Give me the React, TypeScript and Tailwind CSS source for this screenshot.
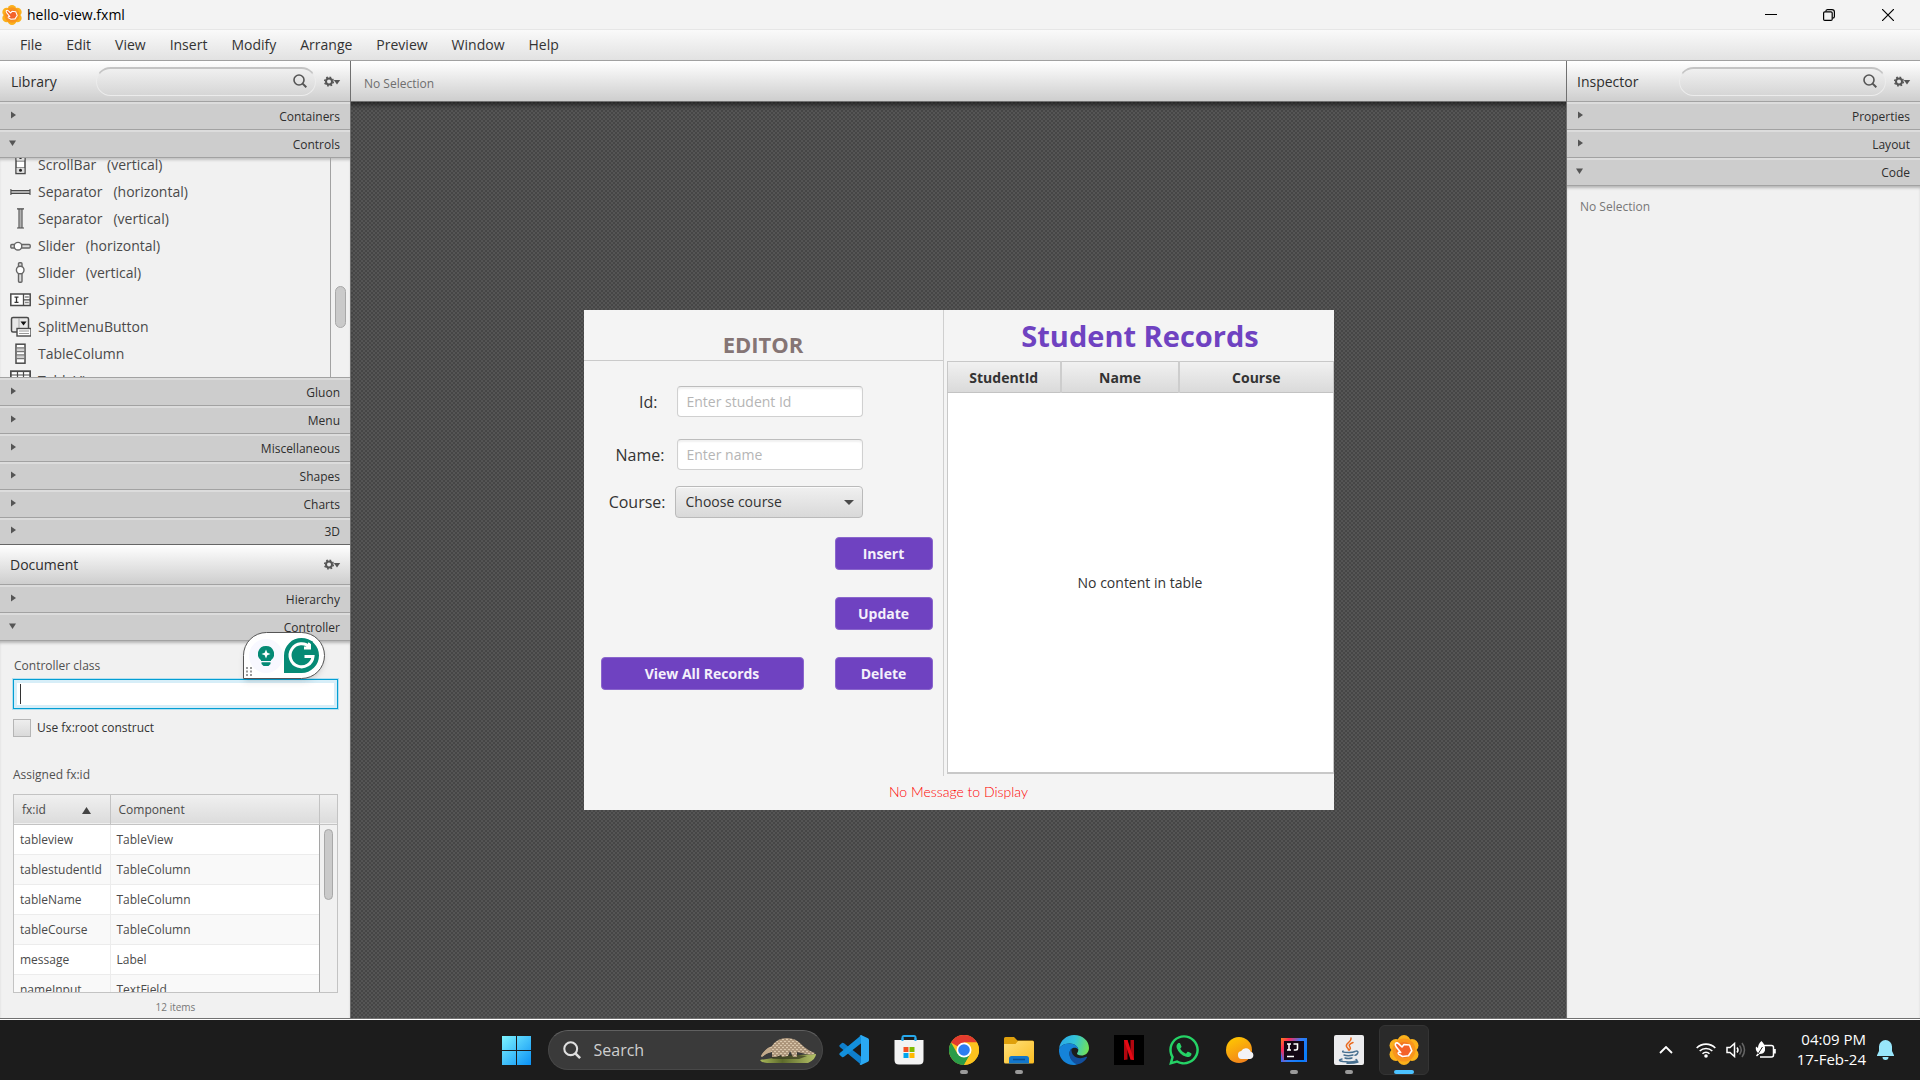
import React from "react";
import { FaWhatsapp } from "react-icons/fa";

type IconProps = { className?: string };

const menus = ["File", "Edit", "View", "Insert", "Modify", "Arrange", "Preview", "Window", "Help"];

/* ---------- small glyphs ---------- */

function SceneBuilderIcon({ className }: IconProps) {
  return (
    <svg viewBox="0 0 30 30" className={className} aria-hidden="true">
      <g fill="#fbb11b">
        <circle cx="15" cy="6.5" r="6.5" />
        <circle cx="15" cy="23.5" r="6.5" />
        <circle cx="7" cy="10.5" r="6.5" />
        <circle cx="23" cy="10.5" r="6.5" />
        <circle cx="7" cy="19.5" r="6.5" />
        <circle cx="23" cy="19.5" r="6.5" />
      </g>
      <circle cx="15" cy="15" r="11.5" fill="#f9951c" />
      <circle cx="15" cy="15" r="8" fill="#f47721" />
      <path
        d="M6.500 8.500c.8-1 2-.8 3 .2l3.500 3.300 2-2.500 5.500.5 2.300 5.800-3.300 5-6 .7-3.800-2.200c-1.200-1.200-.2-2.400 1-2.100l1 .3-4.400-5.600c-.8-1-1.400-2.300-.8-3.400z"
        fill="#f4622a"
        stroke="#fff"
        strokeWidth="1.600"
        strokeLinejoin="round"
      />
    </svg>
  );
}

function SearchIcon({ className }: IconProps) {
  return (
    <svg viewBox="0 0 14 14" className={className} fill="none" stroke="currentColor" aria-hidden="true">
      <circle cx="6" cy="6" r="5" strokeWidth="1.600" />
      <path d="M9.600 9.600 13.300 13.300" strokeWidth="2" />
    </svg>
  );
}

function GearMenuIcon() {
  return (
    <svg viewBox="0 0 17 11" className="h-[11px] w-[17px]" aria-hidden="true">
      <circle cx="5" cy="5.500" r="3" fill="none" stroke="#555" strokeWidth="2" />
      <circle cx="5" cy="5.500" r="4.400" fill="none" stroke="#555" strokeWidth="1.400" strokeDasharray="1.730" />
      <path d="M9.800 4h6.400l-3.200 4.500z" fill="#555" />
    </svg>
  );
}

function GearButton({ label }: { label: string }) {
  return (
    <button type="button" aria-label={label} className="flex">
      <GearMenuIcon />
    </button>
  );
}

/* ---------- side panel pieces ---------- */

function Section({ title, open = false, last = false }: { title: string; open?: boolean; last?: boolean }) {
  return (
    <button
      type="button"
      aria-expanded={open}
      className={
        last
          ? "flex h-[27px] w-full shrink-0 items-center justify-between border-t-2 border-b border-t-[#dcdcdc] border-b-[#666] bg-[#cdcdcd] pr-[10px] pl-[9px] text-xs text-[#2e2e2e]"
          : "flex h-7 w-full shrink-0 items-center justify-between border-t-2 border-b border-t-[#dcdcdc] border-b-[#a2a2a2] bg-[#cdcdcd] pr-[10px] pl-[9px] text-xs text-[#2e2e2e]"
      }
    >
      <svg viewBox="0 0 8 8" className="mb-1 size-2" fill="#555" aria-hidden="true">
        {open ? <path d="M0 1.500h7L3.500 7z" /> : <path d="M2 .5 7 4 2 7.500z" />}
      </svg>
      <span>{title}</span>
    </button>
  );
}

function SearchHeader({ title, titleClass }: { title: string; titleClass: string }) {
  return (
    <div className="flex h-[41px] shrink-0 items-center border-b border-[#a2a2a2] bg-linear-to-b from-white to-[#cecece] pr-[9px]">
      <h2 className={titleClass}>{title}</h2>
      <div className="relative mr-2 flex-1">
        <input
          type="text"
          aria-label={`Search ${title}`}
          className="block h-[29px] w-full rounded-full border border-t-2 border-[#ececec] border-t-[#c4c4c4] bg-linear-to-b from-[#f0f0f0] to-[#d6d6d6] px-4 text-sm outline-none"
        />
        <SearchIcon className="absolute top-[7px] right-[9px] size-[14px] text-[#555]" />
      </div>
      <GearButton label={`${title} options`} />
    </div>
  );
}

const dark = "#4a4a4a";
const controlItems: { label: string; icon: React.ReactNode }[] = [
  {
    label: "ScrollBar \u00a0 (vertical)",
    icon: (
      <g>
        <path d="M6 0h9v19.500H6z" fill="#fff" stroke={dark} strokeWidth="1.500" />
        <path d="M6 7h9M6 13.500h9" stroke={dark} strokeWidth="1.200" />
        <path d="M6.700 13.500h7.600v5.300H6.700zM6.700 1h7.600v5.500H6.700z" fill="#ddd" />
        <circle cx="10.500" cy="3.500" r="1.500" fill="#222" />
        <circle cx="10.500" cy="16.200" r="1.500" fill="#222" />
      </g>
    ),
  },
  {
    label: "Separator \u00a0 (horizontal)",
    icon: (
      <g>
        <path d="M1 11h19" stroke="#b0b0b0" strokeWidth="2" />
        <path d="M1 9.500h19M1 12.500h19M.9 8v6M20 8v6" stroke={dark} strokeWidth="1.100" />
      </g>
    ),
  },
  {
    label: "Separator \u00a0 (vertical)",
    icon: (
      <g>
        <path d="M10.500 1v19" stroke="#b0b0b0" strokeWidth="2" />
        <path d="M9 1v19M12 1v19M7 .9h7M7 20h7" stroke={dark} strokeWidth="1.100" />
      </g>
    ),
  },
  {
    label: "Slider \u00a0 (horizontal)",
    icon: (
      <g stroke="#666" strokeWidth="1.400" fill="#ddd">
        <rect x=".8" y="9.500" width="19.400" height="3.500" rx="1" />
        <circle cx="8" cy="11.200" r="3.800" fill="#fff" />
      </g>
    ),
  },
  {
    label: "Slider \u00a0 (vertical)",
    icon: (
      <g stroke="#666" strokeWidth="1.400" fill="#ddd">
        <rect x="8.500" y=".8" width="3.500" height="19.400" rx="1" />
        <circle cx="10.200" cy="8" r="3.800" fill="#fff" />
      </g>
    ),
  },
  {
    label: "Spinner",
    icon: (
      <g>
        <rect x=".8" y="5" width="19.400" height="11.500" fill="#fff" stroke={dark} strokeWidth="1.500" />
        <path d="M13.500 5v11.500M13.500 10.800h6.500" stroke={dark} strokeWidth="1.300" />
        <path d="M14.800 8h4M14.800 13.500h4" stroke="#888" strokeWidth="1.500" />
        <path d="M4.500 8.200h4M4.500 13.300h4M6.500 8.200v5.100" stroke="#333" strokeWidth="1.300" />
      </g>
    ),
  },
  {
    label: "SplitMenuButton",
    icon: (
      <g>
        <rect x="1.500" y="1.500" width="17" height="14.500" rx="1.500" fill="#e8e8e8" stroke={dark} strokeWidth="1.500" />
        <path d="M9 2v14" stroke="#aaa" />
        <path d="M10.500 5.500h6l-3 4z" fill="#111" />
        <rect x="7" y="12.500" width="14" height="7.500" fill="#fff" stroke={dark} strokeWidth="1.400" />
        <path d="M9 15h10M9 17.500h10" stroke="#999" />
      </g>
    ),
  },
  {
    label: "TableColumn",
    icon: (
      <g>
        <rect x="6" y="1.200" width="9" height="19" fill="#fff" stroke={dark} strokeWidth="1.500" />
        <path d="M6 5h9M6 8.500h9M6 12h9M6 15.500h9" stroke="#777" strokeWidth="1.300" />
        <path d="M6.800 6.800h7.400M6.800 13.700h7.400" stroke="#ccc" strokeWidth="2" />
      </g>
    ),
  },
  {
    label: "TableView",
    icon: (
      <g>
        <rect x=".8" y="1.200" width="19.400" height="18" fill="#fff" stroke={dark} strokeWidth="1.800" />
        <path d="M1 5h19M1 9.500h19M7.500 1v18M13.500 1v18" stroke={dark} strokeWidth="1.200" />
      </g>
    ),
  },
];

function ControlsList() {
  return (
    <div className="flex h-[220px] shrink-0 overflow-hidden border-b border-[#a2a2a2] shadow-[inset_0_3px_3px_-1px_rgba(0,0,0,0.2)]">
      <ul className="-mt-[7px] flex-1">
        {controlItems.map((item) => (
          <li key={item.label} className="flex h-[27px] items-center gap-[7px] pl-[10px] text-sm text-[#4a4a4a]">
            <svg viewBox="0 0 21 21" className="size-[21px]" aria-hidden="true">
              {item.icon}
            </svg>
            <span>{item.label}</span>
          </li>
        ))}
      </ul>
      <div className="w-5 border-l border-[#a2a2a2] pt-32 pl-1">
        <div className="h-[42px] w-[11px] rounded-full border border-[#a8a8a8] bg-[#cacaca]" />
      </div>
    </div>
  );
}

const fxRows = [
  ["tableview", "TableView"],
  ["tablestudentId", "TableColumn"],
  ["tableName", "TableColumn"],
  ["tableCourse", "TableColumn"],
  ["message", "Label"],
  ["nameInput", "TextField"],
];

function GrammarlyWidget() {
  return (
    <div className="absolute -top-[9px] right-[25px] flex h-[47px] w-[82px] items-center rounded-full rounded-bl-none border border-[#555] bg-white pl-[5px] shadow-md">
      <span className="flex size-[34px] items-center justify-center rounded-full bg-[#f8f8ff]">
        <svg viewBox="0 0 16 20" className="h-5 w-4" aria-hidden="true">
          <path d="M8 0a8 8 0 0 0-5 14.300V15h10v-.7A8 8 0 0 0 8 0z" fill="#058a75" />
          <path d="m8 3.500 1.300 3.200L12.500 8 9.300 9.300 8 12.500 6.700 9.300 3.500 8l3.200-1.300z" fill="#fff" />
          <path d="M3.500 16.300h9V18l-2 2h-5l-2-2z" fill="#058a75" />
        </svg>
      </span>
      <svg viewBox="0 0 35 35" className="ml-px size-[35px]" aria-hidden="true">
        <path d="M17.500 0A17.500 17.500 0 1 1 17.500 35H0V17.500A17.500 17.500 0 0 1 17.500 0z" fill="#058a75" />
        <path d="M26 9.500A11.500 11.500 0 1 0 29 18.500H20.500M25.500 4.500V10H20" fill="none" stroke="#fff" strokeWidth="3" />
        <path d="M23.500 3h5v4.500z" fill="#058a75" />
      </svg>
      <svg viewBox="0 0 6 9" className="absolute bottom-[2px] left-[2px] h-[9px] w-[6px]" fill="#999" aria-hidden="true">
        <path d="M0 0h2v2H0zM4 0h2v2H4zM0 3.500h2v2H0zM4 3.500h2v2H4zM0 7h2v2H0zM4 7h2v2H4z" />
      </svg>
    </div>
  );
}

function ControllerPane() {
  return (
    <div className="relative flex min-h-0 flex-1 flex-col pt-4 pr-3 pl-[13px] shadow-[inset_0_3px_3px_-1px_rgba(0,0,0,0.25)]">
      <label htmlFor="controller-class" className="pl-px text-xs leading-[18px] text-[#505050]">
        Controller class
      </label>
      <input
        id="controller-class"
        type="text"
        className="mt-1 h-[30px] shrink-0 border border-[#039ed3] bg-white px-[6px] text-sm shadow-[0_0_0_1px_#b5e0f0,inset_0_0_0_3px_#d7eef8] outline-none"
      />
      <span className="absolute top-[43px] left-5 h-5 w-px bg-[#333]" />
      <label className="mt-[10px] flex items-center gap-[6px] text-xs leading-[18px] text-[#333]">
        <input
          type="checkbox"
          className="size-[18px] appearance-none border border-[#b5b5b5] bg-linear-to-b from-[#eee] to-[#dadada]"
        />
        Use fx:root construct
      </label>
      <h3 className="mt-[29px] text-xs leading-[18px] text-[#505050]">Assigned fx:id</h3>
      <div className="mt-[10px] min-h-0 flex-1 overflow-hidden border border-[#c3c3c3]">
        <table className="w-full table-fixed border-collapse text-left text-xs text-[#4a4a4a]">
          <colgroup>
            <col className="w-[96px]" />
            <col />
            <col className="w-[18px]" />
          </colgroup>
          <thead>
            <tr className="h-[29px] border-b border-[#c3c3c3] bg-linear-to-b from-[#f0f0f0] to-[#dcdcdc]">
              <th className="border-r border-[#c3c3c3] pt-[2px] pl-2 font-normal">
                <span className="flex items-center justify-between pr-[19px]">
                  fx:id
                  <svg viewBox="0 0 9 7" className="h-[7px] w-[9px]" fill="#444" aria-hidden="true">
                    <path d="M4.500 0 9 7H0z" />
                  </svg>
                </span>
              </th>
              <th className="border-r border-[#c3c3c3] pt-[2px] pl-2 font-normal">Component</th>
              <th aria-label="Scroll" />
            </tr>
          </thead>
          <tbody>
            {fxRows.map(([id, component], i) => (
              <tr key={id} className="h-[30px] border-b border-[#ececec] odd:bg-white even:bg-[#f9f9f9]">
                <td className="border-r border-[#ececec] pt-[2px] pl-[6px]">{id}</td>
                <td className="pt-[2px] pl-[6px]">{component}</td>
                {i === 0 && (
                  <td rowSpan={6} className="border-l border-[#a5a5a5] bg-[#f1f1f1] pt-1 pl-1 align-top">
                    <div className="h-[71px] w-[9px] rounded-full border border-[#a8a8a8] bg-[#cacaca]" />
                  </td>
                )}
              </tr>
            ))}
          </tbody>
        </table>
      </div>
      <p className="pt-[7px] pb-1 text-center text-[10px] leading-[14px] text-[#777]">12 items</p>
    </div>
  );
}

/* ---------- designed form on the canvas ---------- */

const purpleButton =
  "h-[33px] rounded-[4px] border border-[#8a66cc] bg-[#6f42c1] text-sm font-bold text-[#f4f0fb]";
const fieldInput =
  "h-[31px] w-[186px] rounded-[4px] border border-[#d0d0d0] border-t-[#bdbdbd] bg-white px-[9px] text-sm shadow-[inset_0_2px_2px_rgba(0,0,0,0.06)] outline-none placeholder:text-[#b5b5b5]";

function FormDesign() {
  return (
    <div className="flex min-h-[500px] w-[750px] flex-col bg-[#f4f4f4] text-[#333]">
      <div className="flex flex-1">
        <section className="flex w-[360px] flex-col border-r border-[#cfcfcf]">
          <h2 className="flex h-[51px] items-end justify-center border-b border-[#cacaca] pb-[2px] text-[22px] leading-7 font-bold text-[#857575]">
            EDITOR
          </h2>
          <div className="flex flex-col items-end pt-[25px] pr-[80px]">
            <div className="flex items-center gap-3">
              <label htmlFor="student-id" className="pr-[7px] text-base">
                Id:
              </label>
              <input id="student-id" placeholder="Enter student Id" className={fieldInput} />
            </div>
            <div className="mt-[22px] flex items-center gap-3">
              <label htmlFor="student-name" className="text-base">
                Name:
              </label>
              <input id="student-name" placeholder="Enter name" className={fieldInput} />
            </div>
            <div className="mt-4 flex items-center gap-[9px]">
              <label htmlFor="student-course" className="text-base">
                Course:
              </label>
              <span className="relative">
                <select
                  id="student-course"
                  className="block h-8 w-[188px] appearance-none rounded-[4px] border border-[#bababa] bg-linear-to-b from-[#f0f0f0] to-[#d9d9d9] px-[10px] text-sm text-[#333] shadow-[inset_0_1px_0_#fafafa]"
                >
                  <option>Choose course</option>
                </select>
                <svg viewBox="0 0 10 5" className="pointer-events-none absolute top-[14px] right-[9px] h-[5px] w-[10px]" fill="#4a4a4a" aria-hidden="true">
                  <path d="M0 0h10L5 5z" />
                </svg>
              </span>
            </div>
          </div>
          <div className="grid grid-cols-[203px_98px] justify-between gap-y-[27px] pt-[19px] pr-[10px] pl-[17px]">
            <button type="button" className={`${purpleButton} col-start-2`}>Insert</button>
            <button type="button" className={`${purpleButton} col-start-2`}>Update</button>
            <button type="button" className={purpleButton}>View All Records</button>
            <button type="button" className={purpleButton}>Delete</button>
          </div>
        </section>
        <section className="flex flex-1 flex-col pb-[2px] pl-[3px]">
          <h1 className="flex h-[51px] items-center justify-center text-[29px] leading-9 font-bold text-[#6f42c1]">
            Student Records
          </h1>
          <table className="h-[413px] w-full table-fixed border-collapse border border-b-2 border-[#c8c8c8] text-sm text-[#333]">
            <colgroup>
              <col className="w-[114px]" />
              <col className="w-[118px]" />
              <col />
            </colgroup>
            <thead>
              <tr className="h-[31px] border-b border-[#c3c3c3] bg-linear-to-b from-[#f1f1f1] to-[#dadada]">
                <th className="border-r-2 border-[#cdcdcd] pt-[2px]">StudentId</th>
                <th className="border-r-2 border-[#cdcdcd] pt-[2px]">Name</th>
                <th className="pt-[2px]">Course</th>
              </tr>
            </thead>
            <tbody>
              <tr>
                <td colSpan={3} className="bg-white text-center">No content in table</td>
              </tr>
            </tbody>
          </table>
        </section>
      </div>
      <p className="flex h-[34px] items-center justify-center pb-[2px] font-[Lato,sans-serif] text-sm font-light text-[#ff0000]">
        No Message to Display
      </p>
    </div>
  );
}

/* ---------- taskbar ---------- */

function TaskButton({ label, running, active, children }: { label: string; running?: boolean; active?: boolean; children: React.ReactNode }) {
  return (
    <button
      type="button"
      aria-label={label}
      className={
        active
          ? "relative flex size-[50px] items-center justify-center rounded-md border border-[#343434] bg-[#2a2a2a]"
          : "relative flex size-[50px] items-center justify-center"
      }
    >
      {children}
      {running && <span className="absolute bottom-px h-1 w-2 rounded-full bg-[#9a9a9a]" />}
      {active && <span className="absolute bottom-0 h-1 w-5 rounded-full bg-[#4cc2ff]" />}
    </button>
  );
}

function StartIcon() {
  return (
    <svg viewBox="0 0 29 29" className="size-[29px]" aria-hidden="true">
      <defs>
        <linearGradient id="start" x1="0" y1="0" x2="1" y2="1">
          <stop offset="0" stopColor="#7df3ff" />
          <stop offset="1" stopColor="#0a91f5" />
        </linearGradient>
      </defs>
      <path d="M0 0h14v14H0zM15 0h14v14H15zM0 15h14v14H0zM15 15h14v14H15z" fill="url(#start)" />
    </svg>
  );
}

function Pangolin() {
  return (
    <svg viewBox="0 0 58 27" className="h-[27px] w-[58px]" aria-hidden="true">
      <defs>
        <pattern id="scales" width="4" height="4" patternUnits="userSpaceOnUse">
          <rect width="4" height="4" fill="#b59c7e" />
          <path d="M0 0q2 4 4 0M-2 2q2 4 4 0M2 2q2 4 4 0" fill="#dac7ac" stroke="#846c55" strokeWidth=".5" />
        </pattern>
        <linearGradient id="grass" x1="0" y1="0" x2="1" y2="0">
          <stop offset="0" stopColor="#a9b85a" />
          <stop offset=".4" stopColor="#5d6a2b" />
          <stop offset="1" stopColor="#b5c268" />
        </linearGradient>
      </defs>
      <path d="M1 23Q22 19 57 17Q57 22 49 26H8Q3 26 1 23z" fill="url(#grass)" />
      <path d="M11 20Q28 16 48 19L40 22H14z" fill="#37381f" opacity=".7" />
      <path d="M2 19Q6 12 13 9Q18 1 28 1Q37 1 43 8Q48 13 56 16Q54 19 47 17L38 15L38 20H34L31 14L29 19L23 20L22 18L17 20H13L13 15Q7 16 3 20z" fill="url(#scales)" />
      <path d="M2 19Q6 12 11 10L12 15Q7 16 3 20z" fill="#c2a98a" />
    </svg>
  );
}

function VsCodeIcon() {
  return (
    <svg viewBox="0 0 30 30" className="size-[30px]" aria-hidden="true">
      <path d="M.5 10.300 3 8Q4 7.500 5 8.300L22.500 22V30L.8 12Q0 11 .5 10.300z" fill="#0f7fcc" />
      <path d="M.5 19.700 3 22Q4 22.500 5 21.700L22.500 8V0L.8 18Q0 19 .5 19.700z" fill="#1390dc" />
      <path d="M22 0 29 3.200Q30 3.700 30 5V25Q30 26.300 29 26.800L22 30Q21 30 20.500 29L22 28V2L20.500 1z" fill="#2aa9f3" />
    </svg>
  );
}

function StoreIcon() {
  return (
    <svg viewBox="0 0 30 30" className="size-[30px]" aria-hidden="true">
      <path d="M8.500 7V2.500Q8.500 1 10 1H20Q21.500 1 21.500 2.500V7" fill="none" stroke="#27a9ec" strokeWidth="2" />
      <path d="M.5 5H29.500V25Q29.500 29.500 25 29.500H5Q.5 29.500 .5 25z" fill="#f3f3f3" />
      <path d="M8.500 6V3M21.500 6V3" stroke="#27a9ec" strokeWidth="2" />
      <path d="M9.500 12h5v5h-5z" fill="#f25022" />
      <path d="M15.500 12h5v5h-5z" fill="#7fba00" />
      <path d="M9.500 18h5v5h-5z" fill="#00a4ef" />
      <path d="M15.500 18h5v5h-5z" fill="#ffb900" />
    </svg>
  );
}

function ChromeIcon() {
  return (
    <svg viewBox="0 0 30 30" className="size-[30px]" aria-hidden="true">
      <circle cx="15" cy="15" r="15" fill="#fcc31e" />
      <path d="M15 15 2 7.500A15 15 0 0 1 28 7.500H15z" fill="#e33b2e" />
      <path d="M2 7.500A15 15 0 0 0 15 30L21.500 18.700 15 15 8.500 18.700z" fill="#2a9c48" />
      <path d="M15 7.500H28A15 15 0 0 1 15 30L21.500 18.700z" fill="#fcc31e" />
      <circle cx="15" cy="15" r="7.500" fill="#fff" />
      <circle cx="15" cy="15" r="5.800" fill="#2d7df0" />
    </svg>
  );
}

function ExplorerIcon() {
  return (
    <svg viewBox="0 0 30 30" className="size-[30px]" aria-hidden="true">
      <defs>
        <linearGradient id="folder" x1="0" y1="0" x2="1" y2="1">
          <stop offset="0" stopColor="#ffe07a" />
          <stop offset="1" stopColor="#fbbd22" />
        </linearGradient>
      </defs>
      <path d="M0 10V3.500Q0 2 1.500 2H10L13.500 5.500H28.500Q30 5.500 30 7V12z" fill="#dfa00c" />
      <path d="M0 9H11.500L14 6H28.500Q30 6 30 7.500V27Q30 28.500 28.500 28.500H1.500Q0 28.500 0 27z" fill="url(#folder)" />
      <path d="M5 28.500V23.500Q5 21 7.500 21H22.500Q25 21 25 23.500V28.500z" fill="#1277cc" />
      <path d="M9 24.500H21" stroke="#0a4f93" strokeWidth="1.500" />
    </svg>
  );
}

function EdgeIcon() {
  return (
    <svg viewBox="0 0 30 30" className="size-[30px]" aria-hidden="true">
      <defs>
        <linearGradient id="edge-top" x1="0" y1="0.300" x2="1" y2=".5">
          <stop offset="0" stopColor="#2aa7e8" />
          <stop offset=".5" stopColor="#33c3d8" />
          <stop offset="1" stopColor="#70e05a" />
        </linearGradient>
      </defs>
      <path d="M0 14C1 5 8 0 15 0C24 0 30 6 30 13C30 18 26 20.500 22.500 20.500C19.500 20.500 18 19.300 18 18.500C18 17.800 19.300 17 19.300 15C19.300 12 16 8.500 10.500 8.500C5 8.500 1 11.500 0 14z" fill="url(#edge-top)" />
      <path d="M0 14C1.500 10.500 5.500 8.500 10.500 8.500C16 8.500 19.300 12 19.300 14.500C17 11.500 11 12.500 10.500 18C10.200 23 14 27.500 19 28.500C17.500 29.600 16 30 14.500 30C6 30-.8 23 0 14z" fill="#1583d8" />
      <path d="M12.500 13.300C9 17 9.500 26 18 29.500C23 28.500 26.500 25.500 28 22.500C28.300 21.800 27.700 21.400 27 21.800C20 25.500 11.500 22 12.500 13.300z" fill="#124f9d" />
    </svg>
  );
}

function NetflixIcon() {
  return (
    <svg viewBox="0 0 30 30" className="size-[30px]" aria-hidden="true">
      <path d="M0 0h30v30H0z" fill="#000" />
      <path d="M10 5h3.500v19.500L10 25zM16.500 5H20v20l-3.500-.5z" fill="#b1060f" />
      <path d="M10 5h3.500L20 25l-3.500-.5z" fill="#e50914" />
    </svg>
  );
}

function WeatherIcon() {
  return (
    <svg viewBox="0 0 30 30" className="size-[30px]" aria-hidden="true">
      <defs>
        <linearGradient id="sun" x1=".2" y1="0" x2=".7" y2="1">
          <stop offset="0" stopColor="#ffc800" />
          <stop offset="1" stopColor="#f2811d" />
        </linearGradient>
      </defs>
      <circle cx="15" cy="15" r="13" fill="url(#sun)" />
      <path d="M17.500 24a4 4 0 0 1-.3-7.900 5.200 5.200 0 0 1 9.500.7A3.700 3.700 0 0 1 26.300 24z" fill="#f3f3f6" />
    </svg>
  );
}

function IntellijIcon() {
  return (
    <svg viewBox="0 0 26 26" className="size-[26px]" aria-hidden="true">
      <defs>
        <linearGradient id="ij" x1="0" y1="0" x2="1" y2=".6">
          <stop offset="0" stopColor="#fc801d" />
          <stop offset=".25" stopColor="#fe2857" />
          <stop offset=".6" stopColor="#2f7cf6" />
          <stop offset="1" stopColor="#087cfa" />
        </linearGradient>
      </defs>
      <path d="M0 1h26v24H0z" fill="url(#ij)" />
      <path d="M0 14 2 25H24L26 21V25H0z" fill="#3d6cf5" />
      <path d="M3 4h20v19H3z" fill="#120614" />
      <path d="M6 7h4M6 13h4M8 7v6M12.500 7h4v4.300q0 1.700-1.700 1.700h-2" fill="none" stroke="#fff" strokeWidth="1.600" />
      <path d="M6 19.500h7" stroke="#fff" strokeWidth="1.500" />
    </svg>
  );
}

function JavaIcon() {
  return (
    <svg viewBox="0 0 30 30" className="size-[30px]" aria-hidden="true">
      <rect width="30" height="30" rx="2" fill="#ececee" />
      <g fill="none" strokeLinecap="round">
        <path d="M17 3C18 7 11 8 12.500 11.500C13 13 14.500 13.500 14.500 15M19 7.500C15 9 14.500 10.500 16 12Q17 13.500 15.500 15" stroke="#ea6a1f" strokeWidth="1.500" />
        <path d="M9 16Q7 17.500 15 17.500Q19 17.500 21 16.500M10 20Q14 21.500 19 20M11 23Q14 24 18 23M22 16Q25 16 23.500 18.500Q22.500 20 21 20.300M8 24Q2.500 25.500 9 26.500Q17 27.500 22.500 26Q24 25.500 22 24.500M24 27Q20 28.500 13 28.300" stroke="#476f8f" strokeWidth="1.400" />
      </g>
    </svg>
  );
}

function Taskbar() {
  return (
    <footer className="grid h-[60px] shrink-0 grid-cols-[1fr_auto_1fr] items-center bg-[#1c1c1c]">
      <div />
      <div className="flex items-center gap-[6px]">
        <TaskButton label="Start"><StartIcon /></TaskButton>
        <label className="flex h-10 w-[275px] items-center rounded-full border border-[#484848] border-t-[#606060] bg-[#3a3a3a] pr-[5px] pl-[14px]">
          <SearchIcon className="size-[18px] text-[#e0e0e0]" />
          <input
            type="text"
            aria-label="Search"
            placeholder="Search"
            className="ml-[13px] w-0 flex-1 bg-transparent text-base outline-none placeholder:text-[#cfcfcf]"
          />
          <Pangolin />
        </label>
        <div className="flex gap-[5px]">
          <TaskButton label="Visual Studio Code"><VsCodeIcon /></TaskButton>
          <TaskButton label="Microsoft Store"><StoreIcon /></TaskButton>
          <TaskButton label="Chrome" running><ChromeIcon /></TaskButton>
          <TaskButton label="File Explorer" running><ExplorerIcon /></TaskButton>
          <TaskButton label="Edge"><EdgeIcon /></TaskButton>
          <TaskButton label="Netflix"><NetflixIcon /></TaskButton>
          <TaskButton label="WhatsApp"><FaWhatsapp className="size-[34px] text-[#25d366]" /></TaskButton>
          <TaskButton label="Weather"><WeatherIcon /></TaskButton>
          <TaskButton label="IntelliJ IDEA" running><IntellijIcon /></TaskButton>
          <TaskButton label="Java" running><JavaIcon /></TaskButton>
          <TaskButton label="Scene Builder" active><SceneBuilderIcon className="size-[30px]" /></TaskButton>
        </div>
      </div>
      <div className="flex items-center justify-end pr-[26px] text-white">
        <svg viewBox="0 0 14 8" className="mr-[23px] h-2 w-[14px]" fill="none" stroke="#fff" strokeWidth="1.800" aria-hidden="true">
          <path d="M1 7 7 1l6 6" />
        </svg>
        <svg viewBox="0 0 20 16" className="mr-[10px] h-4 w-5" fill="none" stroke="#fff" strokeWidth="1.600" aria-hidden="true">
          <path d="M.7 6a13 13 0 0 1 18.600 0M3.700 9a9 9 0 0 1 12.600 0M6.500 11.800a5 5 0 0 1 7 0" />
          <circle cx="10" cy="14" r="1.800" fill="#fff" stroke="none" />
        </svg>
        <svg viewBox="0 0 20 16" className="mr-[9px] h-4 w-5" fill="none" stroke="#fff" strokeWidth="1.500" aria-hidden="true">
          <path d="M1 5.500h3L8.500 1.500v13L4 10.500H1z" />
          <path d="M11 5.500q2 2.500 0 5" />
          <path d="M13.500 3.500q3.500 4.500 0 9M16 1q5 7 0 14" stroke="#666" />
        </svg>
        <svg viewBox="0 0 21 18" className="mr-[21px] h-[18px] w-[21px]" aria-hidden="true">
          <path d="M9 4.500h7.500q2 0 2 2v7.500q0 2-2 2H5" fill="none" stroke="#fff" strokeWidth="1.500" />
          <path d="M19 8h1.800v4.500H19z" fill="#fff" />
          <path d="M6.500 0C9 2.500 10.500 5 10 9.500Q9 13 4.500 13L2 15.500 1 14.500l2-2.500Q0 9 1 5.500L3 7Q3 3 6.500 0z" fill="#fff" />
          <path d="M3 13 7.500 6" stroke="#1c1c1c" />
        </svg>
        <p className="pb-[2px] text-right text-[15px] leading-5">
          04:09 PM
          <br />
          17-Feb-24
        </p>
        <svg viewBox="0 0 17 20" className="ml-[11px] h-5 w-[17px]" fill="#98e6fb" aria-hidden="true">
          <path d="M8.500 0a6.500 6.500 0 0 1 6.500 6.500v4.500l2 4.200q.2.800-.6.800H.6Q-.2 16 0 15.200L2 11V6.500A6.500 6.500 0 0 1 8.500 0zM5.500 17h6a3 3 0 0 1-6 0z" />
        </svg>
      </div>
    </footer>
  );
}

/* ---------- page ---------- */

export default function App() {
  return (
    <div className="flex h-screen min-h-[900px] flex-col overflow-hidden bg-[#f1f1f1] font-['Open_Sans','Noto_Sans',sans-serif]">
      <header className="flex h-[30px] shrink-0 items-center justify-between border-b border-[#e6e6e6] bg-[#f3f3f3] pl-[2px] text-black">
        <div className="flex items-center gap-[5px]">
          <SceneBuilderIcon className="size-5" />
          <h1 className="text-sm">hello-view.fxml</h1>
        </div>
        <div className="flex h-full items-center">
          <button type="button" aria-label="Minimize" className="flex h-full w-[58px] items-center justify-center">
            <svg viewBox="0 0 12 12" className="size-3" stroke="#000" aria-hidden="true"><path d="M0 5.500h12" /></svg>
          </button>
          <button type="button" aria-label="Restore" className="flex h-full w-[58px] items-center justify-center">
            <svg viewBox="0 0 12 12" className="size-3" fill="none" stroke="#000" strokeWidth="1.200" aria-hidden="true">
              <rect x=".6" y="2.800" width="8.600" height="8.600" rx="1.200" />
              <path d="M2.800 2.500Q2.800.6 4.500.6H9Q11.400.6 11.400 3V7.500Q11.400 9.200 9.500 9.200" />
            </svg>
          </button>
          <button type="button" aria-label="Close" className="mr-[3px] flex h-full w-[59px] items-center justify-center">
            <svg viewBox="0 0 12 12" className="size-3" stroke="#000" strokeWidth="1.200" aria-hidden="true"><path d="M0 0 12 12M12 0 0 12" /></svg>
          </button>
        </div>
      </header>

      <nav className="flex h-[31px] shrink-0 items-center border-b border-[#a0a0a0] bg-linear-to-b from-[#fafafa] to-[#e2e2e2] pl-2 text-sm text-[#333]">
        {menus.map((m) => (
          <button key={m} type="button" className="px-3">{m}</button>
        ))}
      </nav>

      <div className="flex min-h-0 flex-1 border-b border-[#707070]">
        <aside className="flex w-[351px] shrink-0 flex-col border-r border-[#707070] bg-[#f1f1f1]">
          <SearchHeader title="Library" titleClass="w-[96px] pt-px pl-[11px] text-sm text-[#2e2e2e]" />
          <Section title="Containers" />
          <Section title="Controls" open />
          <ControlsList />
          <Section title="Gluon" />
          <Section title="Menu" />
          <Section title="Miscellaneous" />
          <Section title="Shapes" />
          <Section title="Charts" />
          <Section title="3D" last />
          <div className="flex h-10 shrink-0 items-center justify-between border-b border-[#a2a2a2] bg-linear-to-b from-white to-[#cecece] pr-[9px] pl-[10px]">
            <h2 className="text-sm text-[#2e2e2e]">Document</h2>
            <GearButton label="Document options" />
          </div>
          <Section title="Hierarchy" />
          <Section title="Controller" open />
          <div className="relative flex min-h-0 flex-1 flex-col">
            <ControllerPane />
            <GrammarlyWidget />
          </div>
        </aside>

        <main className="flex min-w-0 flex-1 flex-col">
          <div className="flex h-[41px] shrink-0 items-center border-b border-[#707070] bg-linear-to-b from-white to-[#cecece] px-[13px] pt-[6px] text-xs text-[#6e6e6e]">
            No Selection
          </div>
          <div className="flex flex-1 items-center justify-center bg-[#4b4b4b] bg-[repeating-conic-gradient(#464646_0_25%,#555555_0_50%)] bg-size-[4px_4px] shadow-[inset_0_6px_5px_-3px_rgba(0,0,0,0.5)]">
            <FormDesign />
          </div>
        </main>

        <aside className="flex w-[354px] shrink-0 flex-col border-l border-[#707070] bg-[#f1f1f1]">
          <SearchHeader title="Inspector" titleClass="w-[112px] pt-px pl-[10px] text-sm text-[#2e2e2e]" />
          <Section title="Properties" />
          <Section title="Layout" />
          <Section title="Code" open />
          <p className="flex-1 px-[13px] pt-3 text-xs leading-[18px] text-[#777] shadow-[inset_0_3px_3px_-1px_rgba(0,0,0,0.25)]">
            No Selection
          </p>
        </aside>
      </div>
      <div className="h-px shrink-0 bg-white" />
      <Taskbar />
    </div>
  );
}
